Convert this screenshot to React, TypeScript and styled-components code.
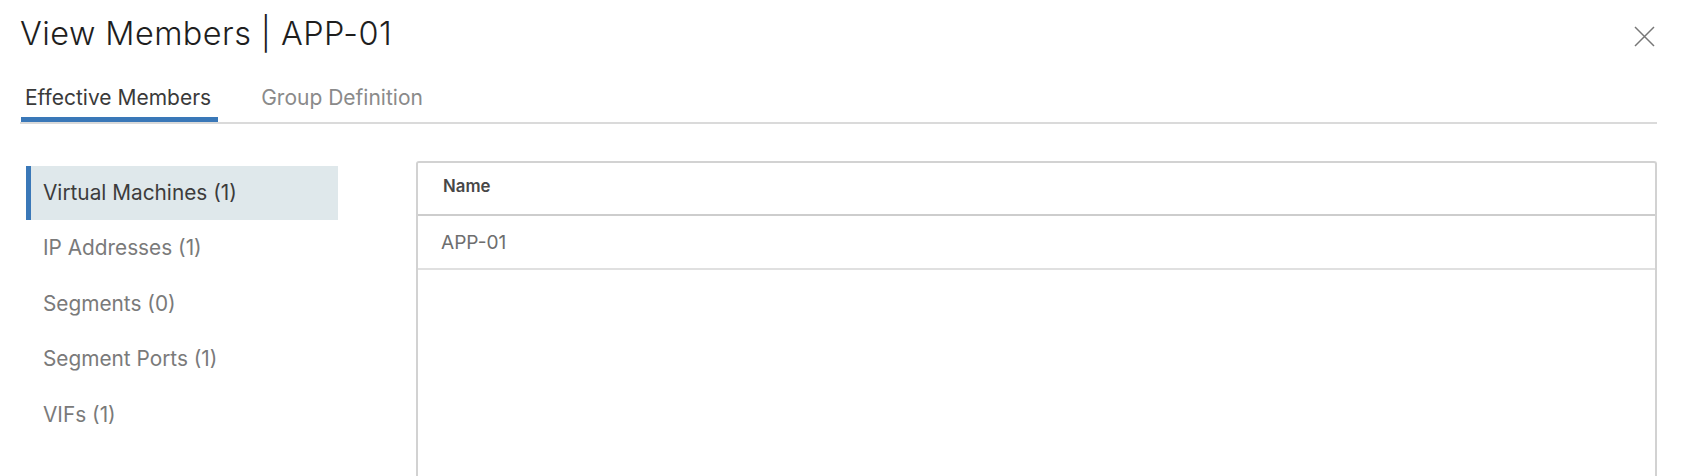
import React, { useState } from "react";
import styled, { createGlobalStyle } from "styled-components";

const GlobalStyle = createGlobalStyle`
  html, body {
    margin: 0;
    padding: 0;
    overflow: hidden;
    background: #fff;
  }
  body {
    font-family: Inter, "Noto Sans", sans-serif;
    -webkit-font-smoothing: antialiased;
  }
`;

const Modal = styled.div`
  box-sizing: border-box;
  width: 100%;
  padding: 14px 31px 0 20px;
`;

const Header = styled.div`
  display: flex;
  justify-content: space-between;
  align-items: flex-start;
`;

const Title = styled.h3`
  margin: 0;
  font-size: 32.4px;
  font-weight: 300;
  line-height: 40px;
  letter-spacing: 0.45px;
  color: #1e1e1e;
`;

const CloseButton = styled.button`
  margin: 12px 2px 0 0;
  padding: 0;
  width: 21px;
  height: 21px;
  border: none;
  background: none;
  cursor: pointer;
  display: flex;
`;

const TabNav = styled.nav`
  display: flex;
  gap: 39px;
  margin-top: 26px;
  padding-left: 1px;
  border-bottom: 2px solid #dadada;
`;

const Tab = styled.button<{ active?: boolean }>`
  padding: 0 7px 6px 4px;
  border: none;
  background: none;
  font-family: inherit;
  font-size: 21px;
  line-height: 36px;
  color: ${({ active }) => (active ? "#3a3a3a" : "#8a8a8a")};
  box-shadow: ${({ active }) => (active ? "inset 0 -5px 0 #3a78b8" : "none")};
  cursor: pointer;
`;

const Body = styled.div`
  display: flex;
  gap: 78px;
  margin-top: 37px;
`;

const SideNav = styled.ul`
  flex-shrink: 0;
  width: 312px;
  margin: 0 0 0 6px;
  padding: 5px 0 0;
  list-style: none;
`;

const NavItem = styled.li<{ active?: boolean }>`
  box-sizing: border-box;
  height: 54px;
  margin-bottom: 1.4px;
  padding-left: 12px;
  border-left: 5px solid ${({ active }) => (active ? "#3a78b8" : "transparent")};
  background: ${({ active }) => (active ? "#dfe8eb" : "transparent")};
  font-size: 20.8px;
  line-height: 54px;
  color: ${({ active }) => (active ? "#3c3c3c" : "#7a7a7a")};
  cursor: pointer;
`;

const Grid = styled.div`
  flex: 1;
  height: 340px;
  border: 2px solid #d2d2d2;
  border-bottom: none;
  border-radius: 3px 3px 0 0;
`;

const HeaderCell = styled.div`
  box-sizing: border-box;
  height: 53px;
  padding: 13px 0 0 25px;
  border-bottom: 2px solid #cdcdcd;
  font-size: 16.8px;
  font-weight: 600;
  line-height: 20px;
  color: #474747;
`;

const Cell = styled.div`
  box-sizing: border-box;
  height: 54px;
  padding-left: 23px;
  border-bottom: 2px solid #e0e0e0;
  font-size: 19.1px;
  line-height: 52px;
  color: #6e6e6e;
`;

const CloseIcon = () => (
  <svg width="21" height="21" viewBox="0 0 21 21" fill="none">
    <path d="M1 1L20 20M20 1L1 20" stroke="#777" strokeWidth="1.5" />
  </svg>
);

const categories = [
  { name: "Virtual Machines", count: 1 },
  { name: "IP Addresses", count: 1 },
  { name: "Segments", count: 0 },
  { name: "Segment Ports", count: 1 },
  { name: "VIFs", count: 1 },
];

const members = ["APP-01"];

export default function App() {
  const [tab, setTab] = useState(0);
  const [selected, setSelected] = useState(0);

  return (
    <>
      <GlobalStyle />
      <Modal>
        <Header>
          <Title>View Members | APP-01</Title>
          <CloseButton aria-label="Close">
            <CloseIcon />
          </CloseButton>
        </Header>
        <TabNav>
          {["Effective Members", "Group Definition"].map((label, i) => (
            <Tab key={label} active={tab === i} onClick={() => setTab(i)}>
              {label}
            </Tab>
          ))}
        </TabNav>
        <Body>
          <SideNav>
            {categories.map((c, i) => (
              <NavItem
                key={c.name}
                active={selected === i}
                onClick={() => setSelected(i)}
              >
                {c.name} ({c.count})
              </NavItem>
            ))}
          </SideNav>
          <Grid>
            <HeaderCell>Name</HeaderCell>
            {members.map((m) => (
              <Cell key={m}>{m}</Cell>
            ))}
          </Grid>
        </Body>
      </Modal>
    </>
  );
}
